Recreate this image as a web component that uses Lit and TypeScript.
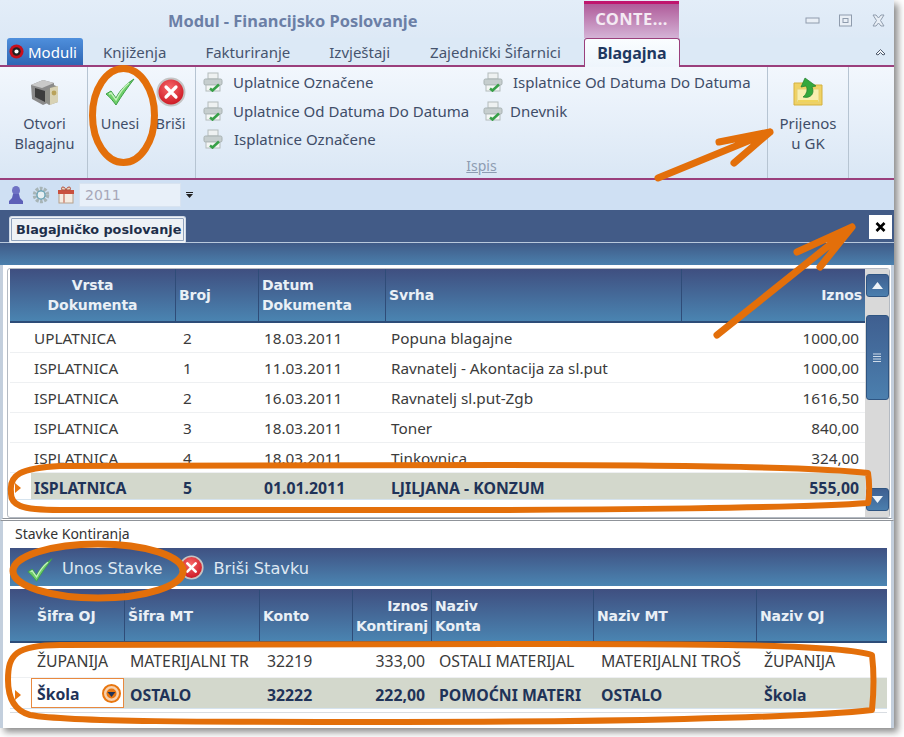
import { LitElement, html, css } from "lit";
import { customElement } from "lit/decorators.js";

const checkIcon = (cls: string) => html`<svg class=${cls} viewBox="0 0 30 28"><path d="M1 16 L6 13 L11 20 C15 12 21 6 29 1 C23 9 17 17 11 27 C8 23 5 19 1 16 Z" fill="#6fd06a" stroke="#3f9f48" stroke-width="1"/><path d="M4 16 L6 15 L11 22 C15 14 19 9 24 5" fill="none" stroke="#c5f2bd" stroke-width="1.4"/></svg>`;
const crossIcon = (cls: string) => html`<svg class=${cls} viewBox="0 0 30 30"><defs><radialGradient id="rg" cx=".45" cy=".35" r=".7"><stop offset="0" stop-color="#f7686a"/><stop offset="1" stop-color="#c8101c"/></radialGradient></defs><circle cx="15" cy="15" r="13.5" fill="url(#rg)" stroke="#c4c4c4" stroke-width="2"/><path d="M10 10 L20 20 M20 10 L10 20" stroke="#fff" stroke-width="3.2" stroke-linecap="round"/></svg>`;
const printerIcon = html`<svg class="pr" viewBox="0 0 20 20"><rect x="5" y="1" width="10" height="6" fill="#eef1f1" stroke="#b4bcbc"/><rect x="1" y="7" width="18" height="6" rx="1.5" fill="#c6cece" stroke="#a8b2b2"/><rect x="3" y="13" width="14" height="6" fill="#f4f6f4" stroke="#b4bcbc"/><path d="M7 16.5 L9.5 18.5 L16 12.5" fill="none" stroke="#38a048" stroke-width="2.6"/></svg>`;

const docRows = [
  ["UPLATNICA", "2", "18.03.2011", "Popuna blagajne", "1000,00"],
  ["ISPLATNICA", "1", "11.03.2011", "Ravnatelj - Akontacija za sl.put", "1000,00"],
  ["ISPLATNICA", "2", "16.03.2011", "Ravnatelj sl.put-Zgb", "1616,50"],
  ["ISPLATNICA", "3", "18.03.2011", "Toner", "840,00"],
  ["ISPLATNICA", "4", "18.03.2011", "Tinkovnica", "324,00"],
  ["ISPLATNICA", "5", "01.01.2011", "LJILJANA - KONZUM", "555,00"],
];

@customElement("app-root")
export class AppRoot extends LitElement {
  static styles = css`
    :host { display: block; width: 904px; height: 737px; position: relative; background: #fff; overflow: hidden; font-family: "Noto Sans", "Open Sans", sans-serif; color: #3a4560; }
    .win { width: 894px; height: 728px; background: #dce9f6; box-shadow: 4px 4px 7px #8a8a8a; display: flex; flex-direction: column; }
    .titlebar { height: 38px; display: flex; background: linear-gradient(#e3edf8, #dde9f6); }
    .title { width: 584px; padding: 11px 0 0 168px; box-sizing: border-box; font: bold 16.4px/20px "Noto Sans", sans-serif; color: #6b7fa6; }
    .ctx { width: 95px; height: 37px; margin-top: 1px; box-sizing: border-box; border-top: 3px solid #c0156e; background: linear-gradient(#b05c9a, #d4b3d6); color: #f4eaf3; font: bold 16.5px/30px "Noto Sans", sans-serif; text-align: center; letter-spacing: .4px; }
    .winbtns { flex: 1; display: flex; justify-content: flex-end; align-items: center; gap: 18px; padding: 2px 8px 0 0; }
    .winbtns svg { width: 15px; height: 13px; }
    .tabs { height: 27px; display: flex; align-items: stretch; border-bottom: 2px solid #9a3f7c; font-size: 15px; }
    .moduli { width: 76px; margin-left: 7px; border-radius: 3px 3px 0 0; background: linear-gradient(#4f8fdc, #2e66b4); color: #fff; display: flex; align-items: center; gap: 4px; padding-left: 2px; box-sizing: border-box; }
    .moduli svg { width: 15px; height: 15px; flex: none; }
    .tab { display: flex; align-items: center; color: #46546e; }
    .t1 { margin-left: 20px; } .t2 { margin-left: 39px; } .t3 { margin-left: 39px; } .t4 { margin-left: 40px; }
    .tab.active { margin-left: 23px; width: 96px; justify-content: center; box-sizing: border-box; height: 29px; margin-bottom: -2px; background: linear-gradient(#fafdff, #eef5fc); border: 1px solid #9a3f7c; border-bottom: none; border-radius: 3px 3px 0 0; font-weight: 700; font-size: 16px; color: #1f3860; }
    .chev { margin-left: auto; padding: 0 7px 0 0; display: flex; align-items: center; }
    .chev svg { width: 13px; height: 9px; }
    .ribbon { height: 111px; display: flex; padding-left: 4px; background: linear-gradient(#f2f7fd, #dae7f5); border-bottom: 2px solid #9a3f7c; font-size: 15px; }
    .grp { border-right: 1px solid #b6c4d2; box-sizing: border-box; display: flex; }
    .g1 { width: 84px; } .g2 { width: 108px; } .g3 { width: 572px; flex-direction: column; } .g4 { width: 81px; }
    .btn { display: flex; flex-direction: column; align-items: center; padding-top: 10px; box-sizing: border-box; line-height: 20px; text-align: center; color: #3f4d68; }
    .btn .ic { height: 30px; margin-bottom: 6px; display: flex; align-items: center; justify-content: center; }
    .g1 .btn { width: 81px; font-size: 14.5px; } .g4 .btn { width: 80px; }
    .bu { width: 64px; font-size: 14.5px; } .bb { width: 37px; font-size: 14.5px; }
    .ic1 { width: 30px; height: 28px; } .ic2 { width: 30px; height: 30px; }
    .prints { display: grid; grid-template-columns: 280px 1fr; grid-auto-rows: 28.5px; height: 90px; padding: 1px 0 0 7px; box-sizing: border-box; }
    .pi { display: flex; align-items: center; gap: 10px; font-size: 15px; color: #3f4d68; white-space: nowrap; }
    .pr { width: 20px; height: 20px; flex: none; }
    .pi.n1 { gap: 11px; } .pi.n2 { gap: 7px; }
    .ispis { text-align: center; font-size: 14px; line-height: 18px; color: #8d9cb2; text-decoration: underline; }
    .qat { height: 30px; background: #cfe0f3; display: flex; align-items: center; padding-left: 7px; }
    .qat svg.q { width: 18px; height: 20px; margin-right: 7px; flex: none; }
    .year { width: 102px; height: 24px; margin-left: -3px; box-sizing: border-box; padding-left: 5px; background: #e8f0f9; border: 1px solid #d8e3f0; font: 14px/22px "DejaVu Sans", sans-serif; color: #a7a7b8; }
    .dd { margin-left: 5px; width: 7px; height: 8px; }
    .body { flex: 1; background: #425b87; display: flex; flex-direction: column; min-height: 0; }
    .doctabs { height: 33px; flex: none; display: flex; padding-left: 9px; box-sizing: border-box; border-bottom: 1px solid #b8c8dc; position: relative; }
    .doctab { width: 177px; height: 27px; margin-top: 6px; box-sizing: border-box; border: 1px solid #cfd9e6; outline: 1px solid #8fa2bd; outline-offset: -3px; border-bottom: none; background: #eef2f6; border-radius: 3px 3px 0 0; font: bold 12.8px/26px "DejaVu Sans", sans-serif; color: #1e2f4a; padding-left: 6px; white-space: nowrap; }
    .xbtn { position: absolute; right: 2px; top: 5px; width: 23px; height: 24px; background: #fff; display: flex; align-items: center; justify-content: center; }
    .xbtn svg { width: 11px; height: 10px; }
    .band { height: 22px; flex: none; background: linear-gradient(#3f5a87, #4b80ad); }
    .top { height: 256px; flex: none; background: #fff; border-left: 3px solid #c3cfdd; border-right: 3px solid #c3cfdd; padding: 3px 1px 0 4px; box-sizing: border-box; display: flex; flex-direction: column; border-bottom: 3px double #8f9399; }
    .frame { flex: 1; min-height: 0; display: flex; border: 1px solid #b4bac2; border-radius: 3px; padding-left: 2px; }
    .gridwrap { flex: 1; min-width: 0; }
    .head { display: grid; height: 54px; background: linear-gradient(#3f4f80, #4a84b1); border-bottom: 2px solid #2d4c78; box-sizing: border-box; color: #eaf0f6; font: bold 14px/20px "DejaVu Sans", sans-serif; letter-spacing: -.1px; }
    .head > div { display: flex; flex-direction: column; justify-content: center; border-left: 1px solid #2f4c78; padding-left: 3px; white-space: nowrap; overflow: hidden; }
    .head > div:first-child { border-left: none; }
    .head > .c { align-items: center; padding: 0; }
    .head > .r { align-items: flex-end; padding: 0 3px 0 0; }
    .row { display: grid; background: #fff; font-size: 15.3px; color: #3b3b3b; white-space: nowrap; border-bottom: 1px solid #eef0f2; box-sizing: border-box; }
    .row > div { display: flex; align-items: center; overflow: hidden; padding-left: 7px; }
    .row > .ind { padding: 0; background: #fff; justify-content: center; }
    .row > .r { justify-content: flex-end; padding: 0 6px 0 0; }
    .row.sel { background: #d3d8cc; color: #1f3358; font-weight: 700; font-size: 15.8px; border-bottom: 1px solid #d5e3ee; }
    .row.sel > div { padding-top: 3px; }
    .row.sel > .edit { padding-top: 0; }
    .tri { width: 0; height: 0; border-left: 6px solid #e8760f; border-top: 5px solid transparent; border-bottom: 5px solid transparent; margin-left: -6px; }
    .cols1 { grid-template-columns: 21px 144px 83px 127px 296px 184px; }
    .head.cols1 { grid-template-columns: 165px 83px 127px 296px 184px; }
    .cols2 { grid-template-columns: 21px 93px 135px 93px 79px 162px 163px 131px; }
    .r30 { height: 30px; }
    .r30.sel { height: 27px; }
    .cb { padding-left: 3px !important; }
    .head > .cb { padding-left: 6px !important; border-left: none; }
    .c8 { padding-left: 8px !important; }
    .c6 { padding-left: 6px !important; }
    .sb { width: 24px; background: #d9d9d9; height: 100%; display: flex; flex-direction: column; align-items: center; padding-top: 5px; box-sizing: border-box; flex: none; }
    .sbb { width: 23px; height: 23px; border-radius: 3px; box-sizing: border-box; border: 1px solid #2f5582; background: linear-gradient(#3f5f90, #4b7fae); display: flex; align-items: center; justify-content: center; flex: none; }
    .sbb svg { width: 11px; height: 7px; }
    .thumb { height: 85px; margin-top: 18px; }
    .thumb svg { width: 8px; height: 9px; }
    .sbb.dn { margin-top: 88px; }
    .bottom { flex: 1; min-height: 0; background: #fff; border-left: 3px solid #c3cfdd; border-right: 3px solid #c3cfdd; box-sizing: border-box; padding: 4px 4px 0 7px; }
    .gtitle { font-size: 14px; line-height: 18px; height: 23px; color: #333; padding-left: 5px; }
    .bar { height: 38px; box-sizing: border-box; padding-top: 3px; background: linear-gradient(#3f5182, #4b85b2); display: flex; align-items: center; font: 16.2px/20px "DejaVu Sans", sans-serif; color: #dfe8f2; padding-left: 17px; margin-bottom: 3px; }
    .bar .ic3 { width: 26px; height: 26px; margin: 2px 9px 0 0; flex: none; }
    .bar .ic4 { width: 25px; height: 25px; margin: -2px 9px 0 17px; flex: none; }
    .h2 { height: 54px; padding-top: 1px; }
    .r2a { height: 35px; font-size: 15.8px; }
    .r2a > div, .row.r2a > .r { padding-top: 1px; }
    .r2b { height: 31px; border-bottom: 1px solid #d5e3ee; }
    .edit { background: #fff; border: 1px solid #e8893f; padding: 0 2px 0 5px !important; justify-content: space-between; box-sizing: border-box; color: #1f3358; }
    .edit span { padding-top: 2px; }
    .edit svg { width: 19px; height: 19px; }
    .after { height: 3px; border-bottom: 1px solid #d9dde2; }
    .notes { position: absolute; left: 0; top: 0; width: 904px; height: 737px; pointer-events: none; }
    .notes * { fill: none; stroke: #e36f0a; stroke-width: 6; stroke-linecap: round; stroke-linejoin: round; }
    .notes .thick { stroke-width: 7; }
  `;

  render() {
    return html`
      <div class="win">
        <div class="titlebar">
          <div class="title">Modul - Financijsko Poslovanje</div>
          <div class="ctx">CONTE...</div>
          <div class="winbtns">
            <svg viewBox="0 0 15 13"><rect x="1" y="4" width="13" height="5" fill="#e9eff6" stroke="#8f9cad"/></svg>
            <svg viewBox="0 0 15 13"><rect x="1.5" y="1" width="12" height="11" fill="#e9eff6" stroke="#8f9cad"/><rect x="5" y="4.5" width="5" height="4" fill="none" stroke="#8f9cad"/></svg>
            <svg viewBox="0 0 15 13"><path d="M2 1 L5 1 L7.5 4 L10 1 L13 1 L9.5 6.5 L13 12 L10 12 L7.5 9 L5 12 L2 12 L5.5 6.5 Z" fill="#e9eff6" stroke="#8f9cad"/></svg>
          </div>
        </div>
        <div class="tabs">
          <div class="moduli"><svg viewBox="0 0 16 16"><circle cx="8" cy="8" r="7.5" fill="#c8101c"/><circle cx="8" cy="8" r="4.5" fill="#222"/><circle cx="8" cy="8" r="2.2" fill="#fff"/></svg>Moduli</div>
          <div class="tab t1">Knjiženja</div>
          <div class="tab t2">Fakturiranje</div>
          <div class="tab t3">Izvještaji</div>
          <div class="tab t4">Zajednički Šifarnici</div>
          <div class="tab active">Blagajna</div>
          <div class="chev"><svg viewBox="0 0 13 9"><path d="M2 7 L6.5 2.5 L11 7 L9 8 L6.5 5.5 L4 8 Z" fill="#f3f7fb" stroke="#4e5a6c"/></svg></div>
        </div>
        <div class="ribbon">
          <div class="grp g1">
            <div class="btn"><div class="ic"><svg class="ic1" viewBox="0 0 30 28"><path d="M1 7 L13 2 L24 5 L24 22 L13 27 L2 21 Z" fill="#8a8a8a"/><path d="M1 7 L13 2 L24 5 L12 10 Z" fill="#c9c9c9"/><path d="M5 10 L15 13 L15 24 L5 19 Z" fill="#3c3c3c"/><path d="M15 13 L24 7 L28 9 L28 24 L19 27 L15 24 Z" fill="#8f8f88"/><path d="M20 10 L28 8 L28 24 L20 27 Z" fill="#d8d2b4"/><circle cx="24" cy="15" r="2.4" fill="#b9a25a"/></svg></div>Otvori<br />Blagajnu</div>
          </div>
          <div class="grp g2">
            <div class="btn bu"><div class="ic">${checkIcon("ic1")}</div>Unesi</div>
            <div class="btn bb"><div class="ic">${crossIcon("ic2")}</div>Briši</div>
          </div>
          <div class="grp g3">
            <div class="prints">
              <div class="pi">${printerIcon}Uplatnice Označene</div>
              <div class="pi">${printerIcon}Isplatnice Od Datuma Do Datuma</div>
              <div class="pi">${printerIcon}Uplatnice Od Datuma Do Datuma</div>
              <div class="pi n2">${printerIcon}Dnevnik</div>
              <div class="pi n1">${printerIcon}Isplatnice Označene</div>
            </div>
            <div class="ispis">Ispis</div>
          </div>
          <div class="grp g4">
            <div class="btn"><div class="ic"><svg class="ic2" viewBox="0 0 30 30"><path d="M1 6 L10 6 L12 8 L29 8 L29 28 L1 28 Z" fill="#f0d264" stroke="#d4b13e"/><rect x="4" y="12" width="22" height="13" fill="#f8eeb0" stroke="#e6cf70"/><path d="M5 24 H25" stroke="#f0d45c" stroke-width="2"/><path d="M10 20 C18 22 22 16 19 10 L23 9 L12 1 L8 10 L13 9 C15 12 14 17 10 20 Z" fill="#34a83c" stroke="#217e2c" stroke-width=".7"/></svg></div>Prijenos<br />u GK</div>
          </div>
        </div>
        <div class="qat">
          <svg class="q" viewBox="0 0 18 20"><ellipse cx="9" cy="5.5" rx="4" ry="4.5" fill="#6f72c4"/><path d="M6 9 L12 9 L13 13 L16 16 L16 19 L2 19 L2 16 L5 13 Z" fill="#5d60b8"/></svg>
          <svg class="q" viewBox="0 0 20 20"><circle cx="10" cy="10" r="7" fill="none" stroke="#a7b4b6" stroke-width="4.4" stroke-dasharray="3 1.4"/><circle cx="10" cy="10" r="4.5" fill="#e6eff2" stroke="#5f9db0" stroke-width="1.4"/></svg>
          <svg class="q" viewBox="0 0 18 20"><rect x="2" y="6" width="14" height="12" fill="#f5ece2" stroke="#b6a08c"/><rect x="1" y="5" width="16" height="4" fill="#c9503e"/><rect x="6" y="9" width="2" height="9" fill="#d8a090"/><path d="M5 5 C3 1 8 1 9 5 C10 1 15 1 13 5 Z" fill="#e8d8c4" stroke="#b4503c"/></svg>
          <div class="year">2011</div>
          <svg class="dd" viewBox="0 0 7 8"><path d="M0 1.5 H7" stroke="#222" stroke-width="1"/><path d="M0 3 H7 L3.5 7 Z" fill="#222"/></svg>
        </div>
        <div class="body">
          <div class="doctabs">
            <div class="doctab">Blagajničko poslovanje</div>
            <div class="xbtn"><svg viewBox="0 0 11 10"><path d="M1.5 1 L9.5 9 M9.5 1 L1.5 9" stroke="#000" stroke-width="2.6"/></svg></div>
          </div>
          <div class="band"></div>
          <div class="top">
            <div class="frame">
              <div class="gridwrap">
                <div class="head cols1">
                  <div class="c"><span>Vrsta</span><span>Dokumenta</span></div>
                  <div>Broj</div>
                  <div><span>Datum</span><span>Dokumenta</span></div>
                  <div>Svrha</div>
                  <div class="r">Iznos</div>
                </div>
                ${docRows.map((r, i) => html`
                  <div class="row cols1 r30 ${i === 5 ? "sel" : ""}">
                    <div class="ind">${i === 5 ? html`<span class="tri"></span>` : ""}</div>
                    <div class="cb">${r[0]}</div>
                    <div class="c8">${r[1]}</div>
                    <div class="c6">${r[2]}</div>
                    <div class="c6">${r[3]}</div>
                    <div class="r">${r[4]}</div>
                  </div>`)}
              </div>
              <div class="sb">
                <div class="sbb"><svg viewBox="0 0 11 7"><path d="M0 7 L5.5 0 L11 7 Z" fill="#eef3f8"/></svg></div>
                <div class="sbb thumb"><svg viewBox="0 0 8 9"><path d="M0 1 H8 M0 3.5 H8 M0 6 H8 M0 8.5 H8" stroke="#cfdcea"/></svg></div>
                <div class="sbb dn"><svg viewBox="0 0 11 7"><path d="M0 0 L5.5 7 L11 0 Z" fill="#eef3f8"/></svg></div>
              </div>
            </div>
          </div>
          <div class="bottom">
            <div class="gtitle">Stavke Kontiranja</div>
            <div class="bar">${checkIcon("ic3")}Unos Stavke${crossIcon("ic4")}Briši Stavku</div>
            <div class="head cols2 h2">
              <div></div>
              <div class="cb">Šifra OJ</div>
              <div>Šifra MT</div>
              <div>Konto</div>
              <div class="r"><span>Iznos</span><span>Kontiranj</span></div>
              <div><span>Naziv</span><span>Konta</span></div>
              <div>Naziv MT</div>
              <div>Naziv OJ</div>
            </div>
            <div class="row cols2 r2a">
              <div class="ind"></div>
              <div class="c6">ŽUPANIJA</div>
              <div class="c6">MATERIJALNI TR</div>
              <div class="c8">32219</div>
              <div class="r">333,00</div>
              <div class="c8">OSTALI MATERIJAL</div>
              <div class="c8">MATERIJALNI TROŠ</div>
              <div class="c8">ŽUPANIJA</div>
            </div>
            <div class="row cols2 sel r2b">
              <div class="ind"><span class="tri"></span></div>
              <div class="edit"><span>Škola</span><svg viewBox="0 0 19 19"><circle cx="9.5" cy="9.5" r="8.5" fill="#f7d0ac" stroke="#e8760f" stroke-width="2"/><circle cx="9.5" cy="9.5" r="5" fill="#e8760f"/><path d="M5.5 8 H13.5 L9.5 13 Z" fill="#1f3358"/></svg></div>
              <div class="c6">OSTALO</div>
              <div class="c8">32222</div>
              <div class="r">222,00</div>
              <div class="c8">POMOĆNI MATERI</div>
              <div class="c8">OSTALO</div>
              <div class="c8">Škola</div>
            </div>
            <div class="after"></div>
          </div>
        </div>
      </div>
      <svg class="notes" viewBox="0 0 904 737">
        <ellipse class="thick" cx="123.5" cy="115.5" rx="31" ry="47"></ellipse>
        <path class="thick" d="M658 178 L770 132 M719 142 L770 132 L734 163"></path>
        <path class="thick" d="M717 335 L852 227 M797 252 L852 227 L820 267"></path>
        <path d="M11 492 C9 475 20 468 60 466 L500 465 C700 465 830 468 868 473 C870 485 869 500 868 503 C800 508 600 510 450 510 L60 510 C20 510 10 505 11 492 Z"></path>
        <ellipse class="thick" cx="98" cy="571" rx="85" ry="27"></ellipse>
        <path d="M8 680 C8 655 15 645 60 645 L560 644 C720 644 840 645 872 655 C875 680 873 700 872 710 C800 718 600 722 400 722 C200 722 70 722 30 715 C12 710 8 695 8 680 Z"></path>
      </svg>
    `;
  }
}
